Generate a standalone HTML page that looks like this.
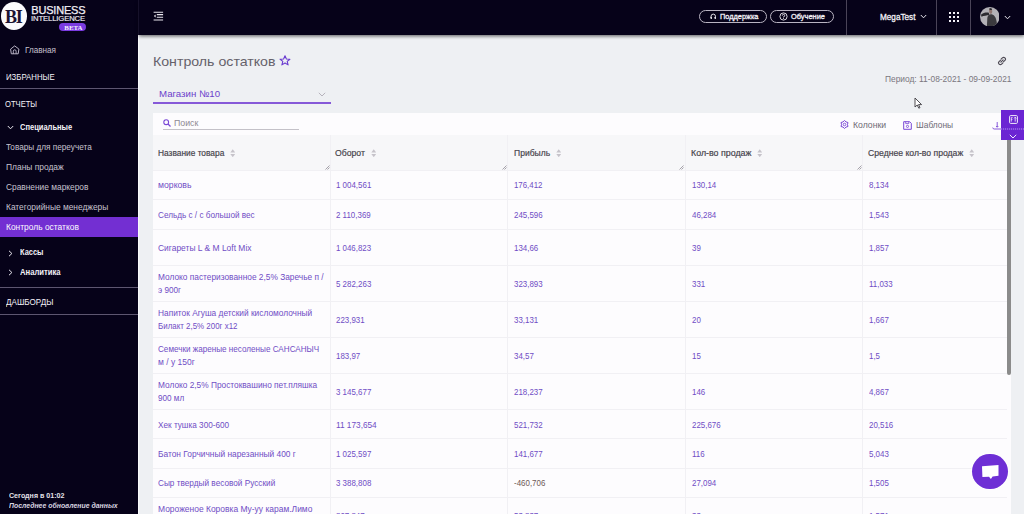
<!DOCTYPE html>
<html><head><meta charset="utf-8">
<style>
*{box-sizing:border-box;margin:0;padding:0}
html,body{width:1024px;height:514px;overflow:hidden;background:#eef0f3;font-family:"Liberation Sans",sans-serif;position:relative}
.a{position:absolute;white-space:nowrap}
#side{position:absolute;left:0;top:0;width:138px;height:514px;background:#060219}
#hdr{position:absolute;left:139px;top:0;width:885px;height:35px;background:#060219;box-shadow:0 1.5px 3.5px rgba(0,0,0,.6)}
.sl{position:absolute;left:0;width:138px;height:1px;background:#5d5670}
.vs{position:absolute;top:0;width:1px;height:35px;background:#4a4458}
.btn{position:absolute;top:10px;height:13px;border:1px solid #b9b4c2;border-radius:7px}
#card{position:absolute;left:153px;top:113px;width:858px;height:401px;background:#fdfcfe}
.hc{position:absolute;top:134.5px;height:36px;background:#f7f7f9}
.vl{position:absolute;top:134.5px;width:1px;height:380px;background:#f1f0f4}
.rl{position:absolute;left:153px;width:854px;height:1px;background:#f1f0f4}
.sort{position:absolute;top:148.8px;width:5.5px;height:8.5px}
.rh{position:absolute;top:164px;width:6px;height:6px}
</style></head><body>

<div id="side"></div><div class="a" style="left:138px;top:35px;width:1px;height:479px;background:#f9fafb"></div>
<div id="hdr"></div><div class="a" style="left:137.5px;top:0;width:1px;height:35px;background:#16112a"></div>

<!-- logo -->
<div class="a" style="left:0.6px;top:2.4px;width:26.6px;height:28px;border-radius:50%;background:#fbfafc"></div>
<div class="a" style="left:5px;top:7.6px;font-family:'Liberation Serif',serif;font-weight:700;font-size:18px;line-height:18px;color:#1d1433;letter-spacing:-1.3px">BI</div>
<div class="a" style="left:31.3px;top:5.3px;font-size:11px;line-height:10px;color:#f2f0f6;letter-spacing:-.2px;transform:scaleX(1.0);transform-origin:left top;-webkit-text-stroke:.25px #f2f0f6">BUSINESS</div>
<div class="a" style="left:31.3px;top:15.2px;font-size:7.8px;line-height:7px;color:#f2f0f6;letter-spacing:-.1px;transform:scaleX(.98);transform-origin:left top;-webkit-text-stroke:.15px #f2f0f6">INTELLIGENCE</div>
<div class="a" style="left:59px;top:23.3px;width:27px;height:7.5px;border-radius:4px;background:#7a3be0"></div>
<div class="a" style="left:64.3px;top:23.6px;font-family:'Liberation Serif',serif;font-weight:700;font-size:6.9px;line-height:7.5px;color:#f5f2fb;letter-spacing:0">BETA</div>

<!-- sidebar icons/lines -->
<svg class="a" style="left:10.3px;top:44.6px" width="10" height="10" viewBox="0 0 10 10"><path d="M4.7 .9 L8.9 4.1 L8.2 8.8 H1.3 L.6 4.1 Z" fill="none" stroke="#c3bed0" stroke-width=".95" stroke-linejoin="round"/><path d="M3.3 8.8 V6.2 A1.4 1.4 0 0 1 6.1 6.2 V8.8" fill="none" stroke="#c3bed0" stroke-width=".9"/></svg>
<div class="sl" style="top:88.3px"></div>
<svg class="a" style="left:7px;top:124.5px" width="7" height="5" viewBox="0 0 7 5"><path d="M.8 1 L3.5 3.8 L6.2 1" fill="none" stroke="#e8e6ee" stroke-width="1"/></svg>
<div class="a" style="left:0;top:217px;width:138px;height:20px;background:#732fd2"></div>
<svg class="a" style="left:7.5px;top:249.5px" width="5" height="7" viewBox="0 0 5 7"><path d="M1 .8 L3.9 3.5 L1 6.2" fill="none" stroke="#e8e6ee" stroke-width="1"/></svg>
<svg class="a" style="left:7.5px;top:269px" width="5" height="7" viewBox="0 0 5 7"><path d="M1 .8 L3.9 3.5 L1 6.2" fill="none" stroke="#e8e6ee" stroke-width="1"/></svg>
<div class="sl" style="top:286.8px"></div>
<div class="sl" style="top:314.2px"></div>

<!-- header -->
<svg class="a" style="left:152.5px;top:10px" width="11" height="12" viewBox="0 0 11 12"><path d="M.6 2.3 H10.1 M3.8 4.6 H10.1 M3.8 7.3 H10.1 M.6 10 H10.1" stroke="#e9e7ef" stroke-width="1.1"/><path d="M2.6 4.4 L.9 5.9 L2.6 7.4 Z" fill="#f4f2f8"/></svg>
<div class="btn" style="left:699px;width:68px"></div>
<svg class="a" style="left:709.5px;top:13.3px" width="6.5" height="6.5" viewBox="0 0 7 7"><path d="M1.1 5 V3.6 A2.4 2.4 0 0 1 5.9 3.6 V5" fill="none" stroke="#f0eef4" stroke-width="1"/><rect x=".6" y="4.1" width="1.5" height="2.3" rx=".4" fill="#f0eef4"/><rect x="4.9" y="4.1" width="1.5" height="2.3" rx=".4" fill="#f0eef4"/></svg>
<div class="btn" style="left:770px;width:64px"></div>
<svg class="a" style="left:778.5px;top:12px" width="9" height="9" viewBox="0 0 9 9"><circle cx="4.5" cy="4.5" r="3.6" fill="none" stroke="#f0eef4" stroke-width=".9"/><path d="M3.3 3.6 A1.2 1.2 0 1 1 4.5 4.8 V5.4" fill="none" stroke="#f0eef4" stroke-width=".9"/><circle cx="4.5" cy="6.6" r=".5" fill="#f0eef4"/></svg>
<div class="vs" style="left:846px"></div>
<svg class="a" style="left:919.5px;top:14px" width="7" height="5" viewBox="0 0 7 5"><path d="M.8 1 L3.5 3.8 L6.2 1" fill="none" stroke="#e8e6ee" stroke-width="1"/></svg>
<div class="vs" style="left:936px"></div>
<svg class="a" style="left:948.5px;top:11.5px" width="10" height="10" viewBox="0 0 10 10" fill="#f4f2f8"><rect x="0" y="0" width="2" height="2"/><rect x="4" y="0" width="2" height="2"/><rect x="8" y="0" width="2" height="2"/><rect x="0" y="4" width="2" height="2"/><rect x="4" y="4" width="2" height="2"/><rect x="8" y="4" width="2" height="2"/><rect x="0" y="8" width="2" height="2"/><rect x="4" y="8" width="2" height="2"/><rect x="8" y="8" width="2" height="2"/></svg>
<div class="vs" style="left:970px"></div>
<svg class="a" style="left:979.7px;top:6.7px" width="19.6" height="19.6" viewBox="0 0 20 20"><defs><clipPath id="cc"><circle cx="10" cy="10" r="10"/></clipPath></defs><g clip-path="url(#cc)"><rect width="20" height="20" fill="#b3b1b6"/><path d="M7 20 L7.5 11 C8 8 10 7 12 7.5 C15 8.5 17 11 17.5 20 Z" fill="#3b3a3e"/><path d="M1 8 C3 6 6 5.5 9 5.8 L9.5 8.2 C7 8.5 4 9 1.5 10 Z" fill="#2c2b30"/><path d="M9.5 2 C11 1.6 12.6 2.5 12.5 4.5 C12.4 6.5 11.5 7.3 10.4 7 C9.4 6.6 9 4 9.5 2 Z" fill="#8f7570"/><path d="M9.3 1.5 L11.5 1 L12.4 3 L10 3 Z" fill="#2a2a2e"/></g></svg>
<svg class="a" style="left:1003.8px;top:14.6px" width="7" height="5" viewBox="0 0 7 5"><path d="M.8 1 L3.5 3.8 L6.2 1" fill="none" stroke="#e8e6ee" stroke-width="1"/></svg>

<!-- title area -->
<svg class="a" style="left:279px;top:54.5px" width="12" height="11" viewBox="0 0 12 11"><path d="M6 .8 L7.4 4 L10.9 4.2 L8.2 6.4 L9.1 9.9 L6 8 L2.9 9.9 L3.8 6.4 L1.1 4.2 L4.6 4 Z" fill="none" stroke="#6a3cd0" stroke-width="1.1" stroke-linejoin="round"/></svg>
<svg class="a" style="left:996.5px;top:55.8px" width="10" height="10" viewBox="0 0 10 10"><path d="M4.1 3.2 L5.4 1.9 A1.75 1.75 0 0 1 7.9 4.4 L6.6 5.7 M5.9 6.8 L4.6 8.1 A1.75 1.75 0 0 1 2.1 5.6 L3.4 4.3 M3.9 6.1 L6.1 3.9" fill="none" stroke="#4e4a54" stroke-width="1.15" stroke-linecap="round"/></svg>
<svg class="a" style="left:317.5px;top:92px" width="8" height="5" viewBox="0 0 8 5"><path d="M.8 .8 L4 4 L7.2 .8" fill="none" stroke="#a7a3ad" stroke-width=".8"/></svg>
<div class="a" style="left:153px;top:102px;width:178px;height:1.5px;background:#8659d8"></div>
<svg class="a" style="left:913.5px;top:96.5px" width="9" height="12" viewBox="0 0 9 12"><path d="M1 1 V10 L3.2 8 L4.8 11.2 L6 10.6 L4.5 7.6 L7.6 7.6 Z" fill="#fff" stroke="#3c3a40" stroke-width=".9" stroke-linejoin="round"/></svg>

<!-- card -->
<div id="card"></div>
<svg class="a" style="left:162.5px;top:118.5px" width="8" height="8" viewBox="0 0 8 8"><circle cx="3.2" cy="3.2" r="2.4" fill="none" stroke="#7a47d6" stroke-width="1.1"/><path d="M5 5 L7.5 7.5" stroke="#7a47d6" stroke-width="1.2"/></svg>
<div class="a" style="left:162.5px;top:129px;width:136px;height:1px;background:#c4c1c8"></div>
<svg class="a" style="left:840px;top:119.8px" width="9" height="9" viewBox="0 0 9 9"><path d="M4.50 0.50 L6.00 1.90 L7.96 2.50 L7.50 4.50 L7.96 6.50 L6.00 7.10 L4.50 8.50 L3.00 7.10 L1.04 6.50 L1.50 4.50 L1.04 2.50 L3.00 1.90 Z" fill="none" stroke="#7a47d6" stroke-width="1" stroke-linejoin="round"/><circle cx="4.5" cy="4.5" r="1.3" fill="none" stroke="#7a47d6" stroke-width=".9"/></svg>
<svg class="a" style="left:902.7px;top:120.6px" width="9" height="9" viewBox="0 0 9 9"><path d="M.7 .7 H6.6 L8.3 2.4 V8.3 H.7 Z" fill="none" stroke="#7a47d6" stroke-width="1" stroke-linejoin="round"/><path d="M2.7 .7 V2.6 H5.8 V.7" fill="none" stroke="#7a47d6" stroke-width=".8"/><circle cx="4.5" cy="5.4" r="1.1" fill="none" stroke="#7a47d6" stroke-width=".85"/></svg>
<svg class="a" style="left:991.5px;top:120.5px" width="10" height="9" viewBox="0 0 10 9"><path d="M5.2 1 V6.2 M4.1 5 L5.2 6.2 L6.3 5 M.7 6.6 Q.9 8 2.2 8 H9.8" fill="none" stroke="#7a47d6" stroke-width=".9"/></svg>

<!-- table header -->
<div class="hc" style="left:153px;width:854px"></div>
<div class="vl" style="left:330px"></div>
<div class="vl" style="left:507px"></div>
<div class="vl" style="left:684.5px"></div>
<div class="vl" style="left:862px"></div>
<div class="rl" style="top:170px;left:153px;width:854px"></div>
<div class="rl" style="top:199px"></div>
<div class="rl" style="top:228.7px"></div>
<div class="rl" style="top:264.7px"></div>
<div class="rl" style="top:300.5px"></div>
<div class="rl" style="top:336.9px"></div>
<div class="rl" style="top:372.8px"></div>
<div class="rl" style="top:408.5px"></div>
<div class="rl" style="top:437.6px"></div>
<div class="rl" style="top:467.6px"></div>
<div class="rl" style="top:496.9px"></div>

<svg class="sort" style="left:229.5px" viewBox="0 0 5 8"><path d="M2.5 .3 L4.8 3.2 H.2 Z M2.5 7.7 L4.8 4.8 H.2 Z" fill="#c6c3ca"/></svg>
<svg class="sort" style="left:370.5px" viewBox="0 0 5 8"><path d="M2.5 .3 L4.8 3.2 H.2 Z M2.5 7.7 L4.8 4.8 H.2 Z" fill="#c6c3ca"/></svg>
<svg class="sort" style="left:555.5px" viewBox="0 0 5 8"><path d="M2.5 .3 L4.8 3.2 H.2 Z M2.5 7.7 L4.8 4.8 H.2 Z" fill="#c6c3ca"/></svg>
<svg class="sort" style="left:756.5px" viewBox="0 0 5 8"><path d="M2.5 .3 L4.8 3.2 H.2 Z M2.5 7.7 L4.8 4.8 H.2 Z" fill="#c6c3ca"/></svg>
<svg class="sort" style="left:968.5px" viewBox="0 0 5 8"><path d="M2.5 .3 L4.8 3.2 H.2 Z M2.5 7.7 L4.8 4.8 H.2 Z" fill="#c6c3ca"/></svg>
<svg class="rh" style="left:323.5px" viewBox="0 0 6 6"><path d="M5.5 1.5 L1.5 5.5 M5.5 3.5 L3.5 5.5" stroke="#8f8b95" stroke-width=".8"/></svg>
<svg class="rh" style="left:500.5px" viewBox="0 0 6 6"><path d="M5.5 1.5 L1.5 5.5 M5.5 3.5 L3.5 5.5" stroke="#8f8b95" stroke-width=".8"/></svg>
<svg class="rh" style="left:678px" viewBox="0 0 6 6"><path d="M5.5 1.5 L1.5 5.5 M5.5 3.5 L3.5 5.5" stroke="#8f8b95" stroke-width=".8"/></svg>
<svg class="rh" style="left:855.5px" viewBox="0 0 6 6"><path d="M5.5 1.5 L1.5 5.5 M5.5 3.5 L3.5 5.5" stroke="#8f8b95" stroke-width=".8"/></svg>

<div class="a" id="x0" style="left:24.80px;top:45.52px;font-size:8.3px;line-height:9.96px;color:#c6c2cf;transform:scaleX(0.9812);transform-origin:0 0">Главная</div>
<div class="a" id="x1" style="left:5.70px;top:72.46px;font-size:8.4px;line-height:10.08px;color:#f3f1f7;transform:scaleX(0.9312);transform-origin:0 0">ИЗБРАННЫЕ</div>
<div class="a" id="x2" style="left:5.30px;top:99.46px;font-size:8.4px;line-height:10.08px;color:#f3f1f7;transform:scaleX(0.9086);transform-origin:0 0">ОТЧЕТЫ</div>
<div class="a" id="x3" style="left:20.00px;top:122.34px;font-size:8.6px;line-height:10.32px;color:#f3f1f7;transform:scaleX(0.8762);transform-origin:0 0;font-weight:700">Специальные</div>
<div class="a" id="x4" style="left:5.70px;top:142.52px;font-size:8.3px;line-height:9.96px;color:#c6c2cf;transform:scaleX(0.9884);transform-origin:0 0">Товары для переучета</div>
<div class="a" id="x5" style="left:5.70px;top:162.52px;font-size:8.3px;line-height:9.96px;color:#c6c2cf;transform:scaleX(1.0153);transform-origin:0 0">Планы продаж</div>
<div class="a" id="x6" style="left:5.50px;top:182.52px;font-size:8.3px;line-height:9.96px;color:#c6c2cf;transform:scaleX(1.0064);transform-origin:0 0">Сравнение маркеров</div>
<div class="a" id="x7" style="left:5.50px;top:202.52px;font-size:8.3px;line-height:9.96px;color:#c6c2cf;transform:scaleX(1.0097);transform-origin:0 0">Категорийные менеджеры</div>
<div class="a" id="x8" style="left:5.50px;top:222.52px;font-size:8.3px;line-height:9.96px;color:#fbfaff;transform:scaleX(1.0154);transform-origin:0 0">Контроль остатков</div>
<div class="a" id="x9" style="left:20.00px;top:247.34px;font-size:8.6px;line-height:10.32px;color:#f3f1f7;transform:scaleX(0.8657);transform-origin:0 0;font-weight:700">Кассы</div>
<div class="a" id="x10" style="left:20.00px;top:267.34px;font-size:8.6px;line-height:10.32px;color:#f3f1f7;transform:scaleX(0.8923);transform-origin:0 0;font-weight:700">Аналитика</div>
<div class="a" id="x11" style="left:5.70px;top:297.46px;font-size:8.4px;line-height:10.08px;color:#f3f1f7;transform:scaleX(0.9680);transform-origin:0 0">ДАШБОРДЫ</div>
<div class="a" id="x12" style="left:9.30px;top:491.62px;font-size:7.3px;line-height:8.76px;color:#e4e1ea;transform:scaleX(0.9695);transform-origin:0 0;font-weight:700">Сегодня в 01:02</div>
<div class="a" id="x13" style="left:9.30px;top:501.62px;font-size:7.3px;line-height:8.76px;color:#d9d5e1;transform:scaleX(0.9469);transform-origin:0 0;font-weight:700;font-style:italic">Последнее обновление данных</div>
<div class="a" id="x14" style="left:720.00px;top:12.44px;font-size:7.6px;line-height:9.12px;color:#f4f2f8;transform:scaleX(0.9691);transform-origin:0 0;-webkit-text-stroke:.3px #f4f2f8">Поддержка</div>
<div class="a" id="x15" style="left:790.50px;top:12.44px;font-size:7.6px;line-height:9.12px;color:#f4f2f8;transform:scaleX(0.9760);transform-origin:0 0;-webkit-text-stroke:.3px #f4f2f8">Обучение</div>
<div class="a" id="x16" style="left:880.30px;top:11.98px;font-size:9.2px;line-height:11.04px;color:#f4f2f8;transform:scaleX(0.8910);transform-origin:0 0;-webkit-text-stroke:.3px #f4f2f8">MegaTest</div>
<div class="a" id="x17" style="left:152.60px;top:53.96px;font-size:13.4px;line-height:16.08px;color:#65616a;transform:scaleX(1.0572);transform-origin:0 0">Контроль остатков</div>
<div class="a" id="x18" style="left:884.50px;top:74.04px;font-size:9.1px;line-height:10.92px;color:#7a767e;transform:scaleX(0.9207);transform-origin:0 0">Период: 11-08-2021 - 09-09-2021</div>
<div class="a" id="x19" style="left:159.30px;top:88.30px;font-size:9.5px;line-height:11.4px;color:#6b3fcb;transform:scaleX(1.0175);transform-origin:0 0">Магазин №10</div>
<div class="a" id="x20" style="left:173.80px;top:118.46px;font-size:8.4px;line-height:10.08px;color:#8d8993;transform:scaleX(1.0466);transform-origin:0 0">Поиск</div>
<div class="a" id="x21" style="left:853.20px;top:120.46px;font-size:8.4px;line-height:10.08px;color:#6f6b75;transform:scaleX(1.0354);transform-origin:0 0">Колонки</div>
<div class="a" id="x22" style="left:916.10px;top:120.46px;font-size:8.4px;line-height:10.08px;color:#6f6b75">Шаблоны</div>
<div class="a" id="x23" style="left:158.20px;top:148.22px;font-size:8.8px;line-height:10.56px;color:#46434b;transform:scaleX(0.9493);transform-origin:0 0;-webkit-text-stroke:.18px #46434b">Название товара</div>
<div class="a" id="x24" style="left:335.40px;top:148.22px;font-size:8.8px;line-height:10.56px;color:#46434b;transform:scaleX(0.9834);transform-origin:0 0;-webkit-text-stroke:.18px #46434b">Оборот</div>
<div class="a" id="x25" style="left:513.50px;top:148.22px;font-size:8.8px;line-height:10.56px;color:#46434b;transform:scaleX(0.9699);transform-origin:0 0;-webkit-text-stroke:.18px #46434b">Прибыль</div>
<div class="a" id="x26" style="left:690.50px;top:148.22px;font-size:8.8px;line-height:10.56px;color:#46434b;transform:scaleX(1.0056);transform-origin:0 0;-webkit-text-stroke:.18px #46434b">Кол-во продаж</div>
<div class="a" id="x27" style="left:868.20px;top:148.22px;font-size:8.8px;line-height:10.56px;color:#46434b;transform:scaleX(0.9808);transform-origin:0 0;-webkit-text-stroke:.18px #46434b">Среднее кол-во продаж</div>
<div class="a" id="x28" style="left:158.00px;top:180.22px;font-size:8.8px;line-height:10.56px;color:#704dc5;transform:scaleX(0.9871);transform-origin:0 0">морковь</div>
<div class="a" id="x29" style="left:336.30px;top:179.30px;font-size:9.5px;line-height:11.4px;color:#704dc5;transform:scaleX(0.8350);transform-origin:0 0">1 004,561</div>
<div class="a" id="x30" style="left:514.00px;top:179.30px;font-size:9.5px;line-height:11.4px;color:#704dc5;transform:scaleX(0.8269);transform-origin:0 0">176,412</div>
<div class="a" id="x31" style="left:691.50px;top:179.30px;font-size:9.5px;line-height:11.4px;color:#704dc5;transform:scaleX(0.8350);transform-origin:0 0">130,14</div>
<div class="a" id="x32" style="left:868.50px;top:179.30px;font-size:9.5px;line-height:11.4px;color:#704dc5;transform:scaleX(0.8350);transform-origin:0 0">8,134</div>
<div class="a" id="x33" style="left:158.00px;top:210.22px;font-size:8.8px;line-height:10.56px;color:#704dc5;transform:scaleX(0.9295);transform-origin:0 0">Сельдь с / с большой вес</div>
<div class="a" id="x34" style="left:336.30px;top:209.30px;font-size:9.5px;line-height:11.4px;color:#704dc5;transform:scaleX(0.8350);transform-origin:0 0">2 110,369</div>
<div class="a" id="x35" style="left:514.00px;top:209.30px;font-size:9.5px;line-height:11.4px;color:#704dc5;transform:scaleX(0.8350);transform-origin:0 0">245,596</div>
<div class="a" id="x36" style="left:691.50px;top:209.30px;font-size:9.5px;line-height:11.4px;color:#704dc5;transform:scaleX(0.8350);transform-origin:0 0">46,284</div>
<div class="a" id="x37" style="left:868.50px;top:209.30px;font-size:9.5px;line-height:11.4px;color:#704dc5;transform:scaleX(0.8350);transform-origin:0 0">1,543</div>
<div class="a" id="x38" style="left:158.00px;top:243.22px;font-size:8.8px;line-height:10.56px;color:#704dc5;transform:scaleX(0.9604);transform-origin:0 0">Сигареты L &amp; M Loft Mix</div>
<div class="a" id="x39" style="left:336.30px;top:242.30px;font-size:9.5px;line-height:11.4px;color:#704dc5;transform:scaleX(0.8305);transform-origin:0 0">1 046,823</div>
<div class="a" id="x40" style="left:514.00px;top:242.30px;font-size:9.5px;line-height:11.4px;color:#704dc5;transform:scaleX(0.8350);transform-origin:0 0">134,66</div>
<div class="a" id="x41" style="left:691.50px;top:242.30px;font-size:9.5px;line-height:11.4px;color:#704dc5;transform:scaleX(0.8350);transform-origin:0 0">39</div>
<div class="a" id="x42" style="left:868.50px;top:242.30px;font-size:9.5px;line-height:11.4px;color:#704dc5;transform:scaleX(0.8350);transform-origin:0 0">1,857</div>
<div class="a" id="x43" style="left:158.00px;top:272.22px;font-size:8.8px;line-height:10.56px;color:#704dc5;transform:scaleX(0.9473);transform-origin:0 0">Молоко пастеризованное 2,5% Заречье п /</div>
<div class="a" id="x44" style="left:158.00px;top:285.22px;font-size:8.8px;line-height:10.56px;color:#704dc5;transform:scaleX(0.9300);transform-origin:0 0">э 900г</div>
<div class="a" id="x45" style="left:336.30px;top:278.30px;font-size:9.5px;line-height:11.4px;color:#704dc5;transform:scaleX(0.8350);transform-origin:0 0">5 282,263</div>
<div class="a" id="x46" style="left:514.00px;top:278.30px;font-size:9.5px;line-height:11.4px;color:#704dc5;transform:scaleX(0.8350);transform-origin:0 0">323,893</div>
<div class="a" id="x47" style="left:691.50px;top:278.30px;font-size:9.5px;line-height:11.4px;color:#704dc5;transform:scaleX(0.8350);transform-origin:0 0">331</div>
<div class="a" id="x48" style="left:868.50px;top:278.30px;font-size:9.5px;line-height:11.4px;color:#704dc5;transform:scaleX(0.8350);transform-origin:0 0">11,033</div>
<div class="a" id="x49" style="left:158.00px;top:308.22px;font-size:8.8px;line-height:10.56px;color:#704dc5;transform:scaleX(0.9476);transform-origin:0 0">Напиток Агуша детский кисломолочный</div>
<div class="a" id="x50" style="left:158.00px;top:321.22px;font-size:8.8px;line-height:10.56px;color:#704dc5;transform:scaleX(0.9018);transform-origin:0 0">Билакт 2,5% 200г х12</div>
<div class="a" id="x51" style="left:336.30px;top:314.30px;font-size:9.5px;line-height:11.4px;color:#704dc5;transform:scaleX(0.8350);transform-origin:0 0">223,931</div>
<div class="a" id="x52" style="left:514.00px;top:314.30px;font-size:9.5px;line-height:11.4px;color:#704dc5;transform:scaleX(0.8350);transform-origin:0 0">33,131</div>
<div class="a" id="x53" style="left:691.50px;top:314.30px;font-size:9.5px;line-height:11.4px;color:#704dc5;transform:scaleX(0.8350);transform-origin:0 0">20</div>
<div class="a" id="x54" style="left:868.50px;top:314.30px;font-size:9.5px;line-height:11.4px;color:#704dc5;transform:scaleX(0.8350);transform-origin:0 0">1,667</div>
<div class="a" id="x55" style="left:158.00px;top:344.22px;font-size:8.8px;line-height:10.56px;color:#704dc5;transform:scaleX(0.9229);transform-origin:0 0">Семечки жареные несоленые САНСАНЫЧ</div>
<div class="a" id="x56" style="left:158.00px;top:357.22px;font-size:8.8px;line-height:10.56px;color:#704dc5;transform:scaleX(0.9656);transform-origin:0 0">м / у 150г</div>
<div class="a" id="x57" style="left:336.30px;top:350.30px;font-size:9.5px;line-height:11.4px;color:#704dc5;transform:scaleX(0.8350);transform-origin:0 0">183,97</div>
<div class="a" id="x58" style="left:514.00px;top:350.30px;font-size:9.5px;line-height:11.4px;color:#704dc5;transform:scaleX(0.8350);transform-origin:0 0">34,57</div>
<div class="a" id="x59" style="left:691.50px;top:350.30px;font-size:9.5px;line-height:11.4px;color:#704dc5;transform:scaleX(0.8350);transform-origin:0 0">15</div>
<div class="a" id="x60" style="left:868.50px;top:350.30px;font-size:9.5px;line-height:11.4px;color:#704dc5;transform:scaleX(0.8350);transform-origin:0 0">1,5</div>
<div class="a" id="x61" style="left:158.00px;top:380.22px;font-size:8.8px;line-height:10.56px;color:#704dc5;transform:scaleX(0.9450);transform-origin:0 0">Молоко 2,5% Простоквашино пет.пляшка</div>
<div class="a" id="x62" style="left:158.00px;top:393.22px;font-size:8.8px;line-height:10.56px;color:#704dc5;transform:scaleX(0.9254);transform-origin:0 0">900 мл</div>
<div class="a" id="x63" style="left:336.30px;top:386.30px;font-size:9.5px;line-height:11.4px;color:#704dc5;transform:scaleX(0.8350);transform-origin:0 0">3 145,677</div>
<div class="a" id="x64" style="left:514.00px;top:386.30px;font-size:9.5px;line-height:11.4px;color:#704dc5;transform:scaleX(0.8350);transform-origin:0 0">218,237</div>
<div class="a" id="x65" style="left:691.50px;top:386.30px;font-size:9.5px;line-height:11.4px;color:#704dc5;transform:scaleX(0.8350);transform-origin:0 0">146</div>
<div class="a" id="x66" style="left:868.50px;top:386.30px;font-size:9.5px;line-height:11.4px;color:#704dc5;transform:scaleX(0.8350);transform-origin:0 0">4,867</div>
<div class="a" id="x67" style="left:158.00px;top:420.22px;font-size:8.8px;line-height:10.56px;color:#704dc5;transform:scaleX(0.9330);transform-origin:0 0">Хек тушка 300-600</div>
<div class="a" id="x68" style="left:336.30px;top:419.30px;font-size:9.5px;line-height:11.4px;color:#704dc5;transform:scaleX(0.8688);transform-origin:0 0">11 173,654</div>
<div class="a" id="x69" style="left:514.00px;top:419.30px;font-size:9.5px;line-height:11.4px;color:#704dc5;transform:scaleX(0.8350);transform-origin:0 0">521,732</div>
<div class="a" id="x70" style="left:691.50px;top:419.30px;font-size:9.5px;line-height:11.4px;color:#704dc5;transform:scaleX(0.8350);transform-origin:0 0">225,676</div>
<div class="a" id="x71" style="left:868.50px;top:419.30px;font-size:9.5px;line-height:11.4px;color:#704dc5;transform:scaleX(0.8350);transform-origin:0 0">20,516</div>
<div class="a" id="x72" style="left:158.00px;top:449.22px;font-size:8.8px;line-height:10.56px;color:#704dc5;transform:scaleX(0.9511);transform-origin:0 0">Батон Горчичный нарезанный 400 г</div>
<div class="a" id="x73" style="left:336.30px;top:448.30px;font-size:9.5px;line-height:11.4px;color:#704dc5;transform:scaleX(0.8350);transform-origin:0 0">1 025,597</div>
<div class="a" id="x74" style="left:514.00px;top:448.30px;font-size:9.5px;line-height:11.4px;color:#704dc5;transform:scaleX(0.8350);transform-origin:0 0">141,677</div>
<div class="a" id="x75" style="left:691.50px;top:448.30px;font-size:9.5px;line-height:11.4px;color:#704dc5;transform:scaleX(0.8350);transform-origin:0 0">116</div>
<div class="a" id="x76" style="left:868.50px;top:448.30px;font-size:9.5px;line-height:11.4px;color:#704dc5;transform:scaleX(0.8350);transform-origin:0 0">5,043</div>
<div class="a" id="x77" style="left:158.00px;top:478.22px;font-size:8.8px;line-height:10.56px;color:#704dc5;transform:scaleX(0.9358);transform-origin:0 0">Сыр твердый весовой Русский</div>
<div class="a" id="x78" style="left:336.30px;top:477.30px;font-size:9.5px;line-height:11.4px;color:#704dc5;transform:scaleX(0.8350);transform-origin:0 0">3 388,808</div>
<div class="a" id="x79" style="left:514.00px;top:477.30px;font-size:9.5px;line-height:11.4px;color:#6e5a55;transform:scaleX(0.8350);transform-origin:0 0">-460,706</div>
<div class="a" id="x80" style="left:691.50px;top:477.30px;font-size:9.5px;line-height:11.4px;color:#704dc5;transform:scaleX(0.8350);transform-origin:0 0">27,094</div>
<div class="a" id="x81" style="left:868.50px;top:477.30px;font-size:9.5px;line-height:11.4px;color:#704dc5;transform:scaleX(0.8350);transform-origin:0 0">1,505</div>
<div class="a" id="x82" style="left:158.00px;top:504.22px;font-size:8.8px;line-height:10.56px;color:#704dc5;transform:scaleX(0.9616);transform-origin:0 0">Мороженое Коровка Му-уу карам.Лимо</div>
<div class="a" id="x83" style="left:158.00px;top:517.22px;font-size:8.8px;line-height:10.56px;color:#704dc5;transform:scaleX(0.9300);transform-origin:0 0">нный</div>
<div class="a" id="x84" style="left:336.30px;top:510.30px;font-size:9.5px;line-height:11.4px;color:#704dc5;transform:scaleX(0.8350);transform-origin:0 0">807,847</div>
<div class="a" id="x85" style="left:514.00px;top:510.30px;font-size:9.5px;line-height:11.4px;color:#704dc5;transform:scaleX(0.8350);transform-origin:0 0">53,837</div>
<div class="a" id="x86" style="left:691.50px;top:510.30px;font-size:9.5px;line-height:11.4px;color:#704dc5;transform:scaleX(0.8350);transform-origin:0 0">33</div>
<div class="a" id="x87" style="left:868.50px;top:510.30px;font-size:9.5px;line-height:11.4px;color:#704dc5;transform:scaleX(0.8350);transform-origin:0 0">1,571</div>

<!-- scrollbar -->
<div class="a" style="left:1007px;top:134px;width:4px;height:241px;background:#8b8b8b;border-radius:0 0 2px 2px"></div>

<!-- purple side widget -->
<div class="a" style="left:1001px;top:110px;width:23px;height:30px;background:#6b25d3"></div>
<svg class="a" style="left:1001px;top:128px" width="23" height="2" viewBox="0 0 23 2"><path d="M0 1 H23" stroke="#b193f0" stroke-width="1" stroke-dasharray="1.2 0.8"/></svg>
<svg class="a" style="left:1008.6px;top:115.2px" width="9" height="9" viewBox="0 0 9 9"><rect x=".6" y=".6" width="7.8" height="7.8" rx="1" fill="none" stroke="#f2eefa" stroke-width="1"/><path d="M2.3 2.6 V6.6 M2.3 2.6 H3.6 M2.3 4.4 H3.4 M6.2 2.2 V6.6 M5.1 3.4 L6.2 2.2 L7.3 3.4" fill="none" stroke="#f2eefa" stroke-width=".85"/></svg>
<svg class="a" style="left:1009.2px;top:133.6px" width="8" height="5" viewBox="0 0 8 5"><path d="M.8 .8 L4 4 L7.2 .8" fill="none" stroke="#efeafa" stroke-width="1"/></svg>

<!-- chat -->
<div class="a" style="left:972.3px;top:453.8px;width:35.5px;height:35.5px;border-radius:50%;background:#6e2fd5;box-shadow:0 0 0 1px rgba(255,255,255,.9)"></div>
<svg class="a" style="left:981px;top:464px" width="18" height="16" viewBox="0 0 18 16"><path d="M1 2.2 L17.5 1 L17.5 11.8 L11.6 12.5 L9.9 15 L8 12.8 L1.4 13 Z" fill="#fff"/></svg>

</body></html>
